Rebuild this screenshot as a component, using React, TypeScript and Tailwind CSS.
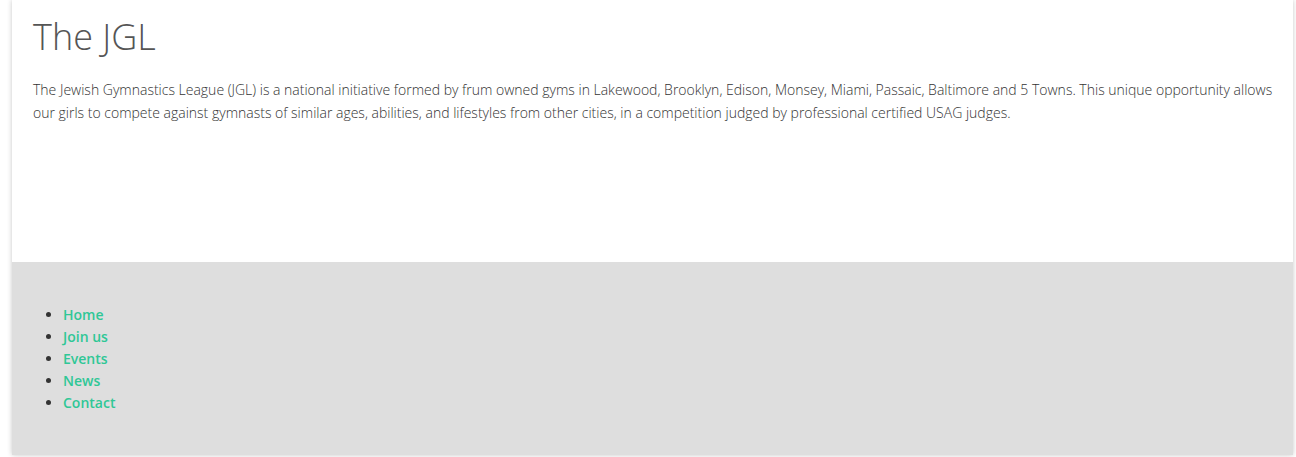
export default function App() {
  const links = ["Home", "Join us", "Events", "News", "Contact"];

  return (
    <div className="min-h-[457px] bg-white font-['Open_Sans',sans-serif]">
      <div className="ml-[12px] w-[1281px] shadow-[0_0_5px_rgba(0,0,0,0.22)]">
        <div className="bg-white pl-[21px] pr-[12px] pt-[14px] pb-[138px]">
          <h1 className="text-[36px] font-light leading-[46px] text-[#555]">
            The JGL
          </h1>
          <p className="mt-[18px] text-[14px] font-light leading-[23px] text-[#333]">
            The Jewish Gymnastics League (JGL) is a national initiative formed by frum owned
            gyms in Lakewood, Brooklyn, Edison, Monsey, Miami, Passaic, Baltimore and 5 Towns.
            This unique opportunity allows our girls to compete against gymnasts of similar
            ages, abilities, and lifestyles from other cities, in a competition judged by
            professional certified USAG judges.
          </p>
        </div>
        <div className="bg-[#dedede] pt-[42px] pb-[41px] pl-[51px]">
          <ul className="list-disc text-[#333]">
            {links.map((l) => (
              <li key={l} className="text-[14px] leading-[22px]">
                <a href="#" className="font-semibold text-[#2fc796]">
                  {l}
                </a>
              </li>
            ))}
          </ul>
        </div>
      </div>
    </div>
  );
}
